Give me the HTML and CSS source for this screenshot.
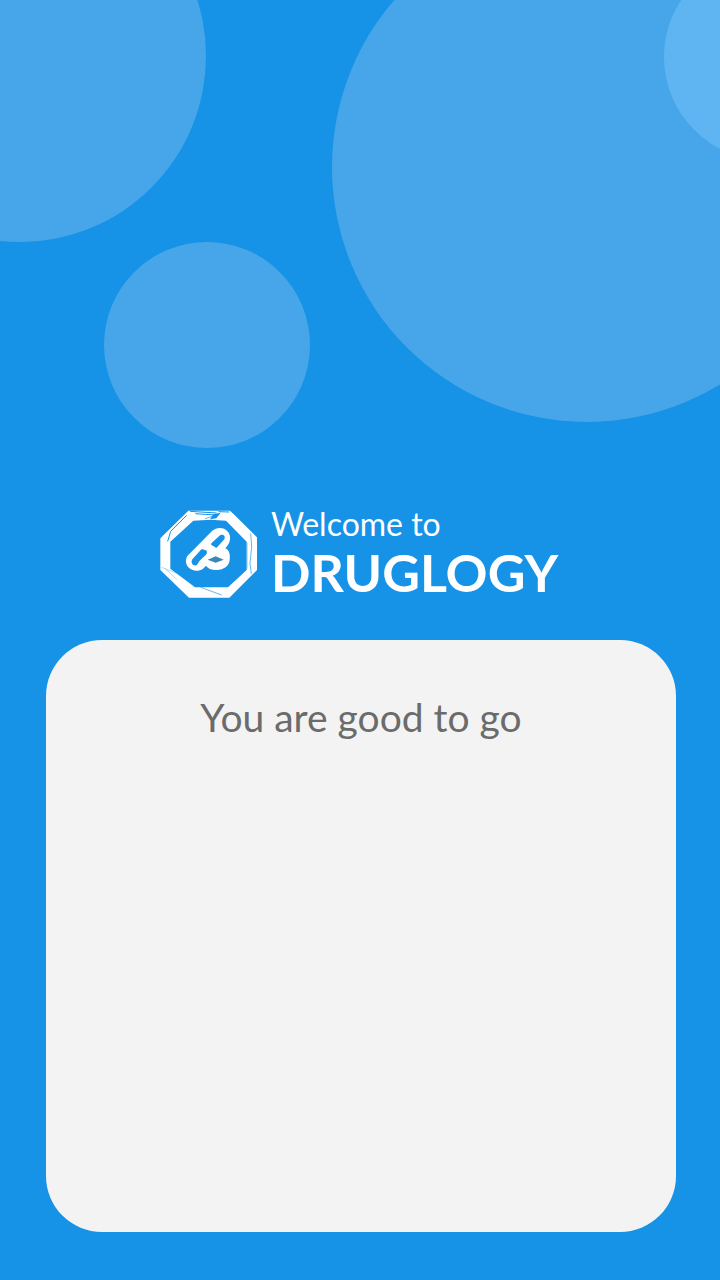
FILE: index.html
```html
<!DOCTYPE html>
<html lang="en">
<head>
<meta charset="utf-8">
<meta name="viewport" content="width=device-width, initial-scale=1">
<title>Druglogy</title>
<link rel="stylesheet" href="styles.css">
</head>
<body>
<div class="page">
  <div class="bubbles" aria-hidden="true">
    <span class="bubble bubble-left"></span>
    <span class="bubble bubble-large"></span>
    <span class="bubble bubble-small"></span>
    <span class="bubble bubble-corner"></span>
  </div>
  <header class="brand">
    <svg class="logo" viewBox="30 30 291 264" aria-hidden="true">
      <path fill="#fff" fill-rule="evenodd" d="M115 32H240L256 47L321 112V210L238 293H117L31 210V115ZM130 62L61 125V206L135 262H234L290 210V125L228 62L182 59Z"/>
      <g fill="none" stroke="#1692e6" stroke-width="2">
        <path d="M110 46L62 94L53 124" stroke-width="3"/>
        <path d="M302 100L305 140L300 190L304 222"/>
        <path d="M292 128V206" stroke-width="1"/>
        <path d="M34 202L88 222M46 206L80 238" stroke-width="1"/>
        <path d="M152 262L215 285"/>
        <path d="M120 34L200 39M136 41L196 45M205 35L238 36" stroke-width="3"/>
        <path d="M165 56L190 48"/>
      </g>
      <path fill="#1692e6" d="M190 43L212 38L199 55L180 58Z"/>
      <path fill="#fff" d="M112 168L186 93C202 79 225 82 235 97C244 111 241 127 231 139L226 145C238 151 241 163 239 180C238 198 219 211 199 210C184 210 173 205 168 197L159 206C146 216 126 214 115 202C106 191 106 178 112 168Z"/>
      <path fill="#1692e6" d="M155 147L127 178C121 189 129 199 139 196C144 193 145 185 151 180L168 164C173 158 171 151 165 150ZM184 130L210 106C218 101 228 108 223 118L200 143C195 143 193 138 188 137C184 136 182 134 184 130Z"/>
      <path fill="#3b87b5" d="M173 179L197 169L221 179L197 188Z"/>
    </svg>
    <h1 class="title"><span class="welcome">Welcome to</span><span class="name">DRUGLOGY</span></h1>
  </header>
  <main class="card">
    <p class="message">You are good to go</p>
  </main>
</div>
</body>
</html>
```
FILE: styles.css
```css
* {
  box-sizing: border-box;
}

body {
  margin: 0;
  font-family: Lato, sans-serif;
}

.page {
  position: relative;
  display: flex;
  flex-direction: column;
  min-height: 100vh;
  padding: 504px 44px 48px 46px;
  overflow: hidden;
  background: #1692e6;
}

.bubbles {
  position: absolute;
  inset: 0;
}

.bubble {
  position: absolute;
  border-radius: 50%;
  background: #46a6e9;
}

.bubble-left {
  top: -130px;
  left: -166px;
  width: 372px;
  height: 372px;
}

.bubble-large {
  top: -88px;
  left: 332px;
  width: 510px;
  height: 510px;
}

.bubble-small {
  top: 242px;
  left: 104px;
  width: 206px;
  height: 206px;
}

.bubble-corner {
  top: -46px;
  left: 664px;
  width: 206px;
  height: 206px;
  background: #5fb5f2;
}

.brand {
  position: relative;
  display: flex;
  align-items: center;
  justify-content: center;
  gap: 14px;
  height: 100px;
  margin-bottom: 36px;
  padding-right: 4px;
}

.logo {
  width: 97px;
  height: 88px;
}

.title {
  display: flex;
  flex-direction: column;
  margin: 0;
  padding-bottom: 8px;
  color: #fff;
}

.welcome {
  font-size: 32px;
  font-weight: 400;
  line-height: 44px;
}

.name {
  font-size: 52px;
  font-weight: 700;
  line-height: 52px;
}

.card {
  position: relative;
  flex: 1;
  padding: 52px 24px;
  border-radius: 56px;
  background: #f3f3f3;
}

.message {
  margin: 0;
  color: #6b6b6b;
  font-size: 39px;
  line-height: 50px;
  text-align: center;
}
```
